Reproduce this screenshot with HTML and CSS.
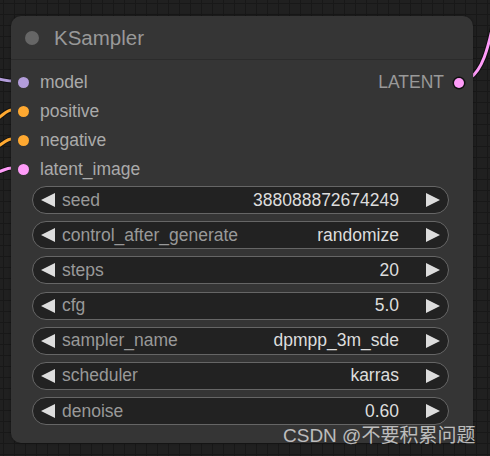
FILE: index.html
```html
<!DOCTYPE html>
<html>
<head>
<meta charset="utf-8">
<link rel="stylesheet" href="styles.css">
</head>
<body>
<div class="canvas">
  <svg class="wires" width="490" height="456" viewBox="0 0 490 456">
    <g fill="none" stroke-linecap="round">
      <path d="M-5 78 C 3 80, 6 81, 12 81" stroke="#111" stroke-width="5"/>
      <path d="M-5 78 C 3 80, 6 81, 12 81" stroke="#b39ddb" stroke-width="3"/>
      <path d="M-5 120 C 3 116, 6 110, 12 110" stroke="#111" stroke-width="5"/>
      <path d="M-5 120 C 3 116, 6 110, 12 110" stroke="#ffa931" stroke-width="3"/>
      <path d="M-5 148 C 3 144, 6 139, 12 139" stroke="#111" stroke-width="5"/>
      <path d="M-5 148 C 3 144, 6 139, 12 139" stroke="#ffa931" stroke-width="3"/>
      <path d="M-5 173 C 3 171, 6 168, 12 168" stroke="#111" stroke-width="5"/>
      <path d="M-5 173 C 3 171, 6 168, 12 168" stroke="#ff9cf9" stroke-width="3"/>
      <path d="M470 78 C 482 70, 488 50, 494 20" stroke="#111" stroke-width="5"/>
      <path d="M470 78 C 482 70, 488 50, 494 20" stroke="#ff9cf9" stroke-width="3"/>
    </g>
  </svg>
  <div class="node">
    <div class="node-header">
      <span class="title-dot"></span>
      <span class="title">KSampler</span>
    </div>
    <div class="slots">
      <div class="slot-row">
        <div class="slot in"><span class="dot lavender"></span>model</div>
        <div class="slot out">LATENT<span class="dot pink outlined"></span></div>
      </div>
      <div class="slot-row"><div class="slot in"><span class="dot orange"></span>positive</div></div>
      <div class="slot-row"><div class="slot in"><span class="dot orange"></span>negative</div></div>
      <div class="slot-row"><div class="slot in"><span class="dot pink"></span>latent_image</div></div>
    </div>
    <div class="widgets">
      <div class="widget"><span class="arrow left"></span><span class="label">seed</span><span class="value">388088872674249</span><span class="arrow right"></span></div>
      <div class="widget"><span class="arrow left"></span><span class="label">control_after_generate</span><span class="value">randomize</span><span class="arrow right"></span></div>
      <div class="widget"><span class="arrow left"></span><span class="label">steps</span><span class="value">20</span><span class="arrow right"></span></div>
      <div class="widget"><span class="arrow left"></span><span class="label">cfg</span><span class="value">5.0</span><span class="arrow right"></span></div>
      <div class="widget"><span class="arrow left"></span><span class="label">sampler_name</span><span class="value">dpmpp_3m_sde</span><span class="arrow right"></span></div>
      <div class="widget"><span class="arrow left"></span><span class="label">scheduler</span><span class="value">karras</span><span class="arrow right"></span></div>
      <div class="widget"><span class="arrow left"></span><span class="label">denoise</span><span class="value">0.60</span><span class="arrow right"></span></div>
    </div>
  </div>
  <div class="watermark">CSDN @不要积累问题</div>
</div>
</body>
</html>
```

FILE: styles.css
```css
html, body {
  margin: 0;
  padding: 0;
}
body {
  width: 490px;
  height: 456px;
  overflow: hidden;
  background-color: #202020;
  background-image:
    linear-gradient(to right, #181818 1px, transparent 1px),
    linear-gradient(to bottom, #181818 1px, transparent 1px);
  background-size: 11px 11px;
  background-position: 3px 3px;
  font-family: "Liberation Sans", Arial, sans-serif;
}
.canvas {
  position: relative;
  width: 490px;
  height: 456px;
  padding: 16px 0 0 11px;
  box-sizing: border-box;
}
.wires {
  position: absolute;
  left: 0;
  top: 0;
}
.node {
  position: relative;
  width: 462px;
  height: 427px;
  background: #353535;
  border-radius: 10px;
  box-shadow: 0 0 3px rgba(0,0,0,0.4);
  display: flex;
  flex-direction: column;
}
.node-header {
  height: 44px;
  border-bottom: 1px solid #2b2b2b;
  display: flex;
  align-items: center;
  padding-left: 14px;
  box-sizing: border-box;
}
.title-dot {
  width: 14px;
  height: 14px;
  border-radius: 50%;
  background: #666;
  margin-right: 15px;
}
.title {
  color: #999;
  font-size: 20.5px;
  margin-top: 1px;
}
.slots {
  padding-top: 8px;
  display: flex;
  flex-direction: column;
}
.slot-row {
  height: 29px;
  display: flex;
  align-items: center;
  justify-content: space-between;
}
.slot {
  display: flex;
  align-items: center;
  color: #aaa;
  font-size: 17.5px;
}
.slot.in {
  padding-left: 7px;
}
.slot.in .dot {
  margin-right: 11px;
}
.slot.out {
  padding-right: 9px;
  color: #999;
}
.slot.out .dot {
  margin-left: 10px;
}
.dot {
  width: 11px;
  height: 11px;
  border-radius: 50%;
  display: inline-block;
}
.dot.lavender { background: #b39ddb; }
.dot.orange { background: #ffa931; }
.dot.pink { background: #ff9cf9; }
.dot.outlined {
  width: 10px;
  height: 10px;
  box-shadow: 0 0 0 1.5px #111;
}
.widgets {
  margin-top: 2px;
  padding: 0 24px 0 21px;
  display: flex;
  flex-direction: column;
  gap: 7.2px;
}
.widget {
  height: 28px;
  box-sizing: border-box;
  border: 1px solid #666;
  border-radius: 15px;
  background: #222;
  display: flex;
  align-items: center;
  padding: 0 8px 0 8px;
  font-size: 17.5px;
}
.label {
  color: #999;
  margin-left: 7px;
  flex: 1;
}
.value {
  color: #ddd;
  margin-right: 27px;
}
.arrow {
  width: 0;
  height: 0;
  border-top: 7px solid transparent;
  border-bottom: 7px solid transparent;
}
.arrow.left {
  border-right: 14px solid #ddd;
}
.arrow.right {
  border-left: 14px solid #ddd;
}
.watermark {
  position: absolute;
  left: 283px;
  top: 425px;
  font-size: 19px;
  color: rgba(235,235,235,0.75);
  font-family: "Liberation Sans", "Noto Sans CJK SC", sans-serif;
  white-space: nowrap;
  line-height: 22px;
}
```
